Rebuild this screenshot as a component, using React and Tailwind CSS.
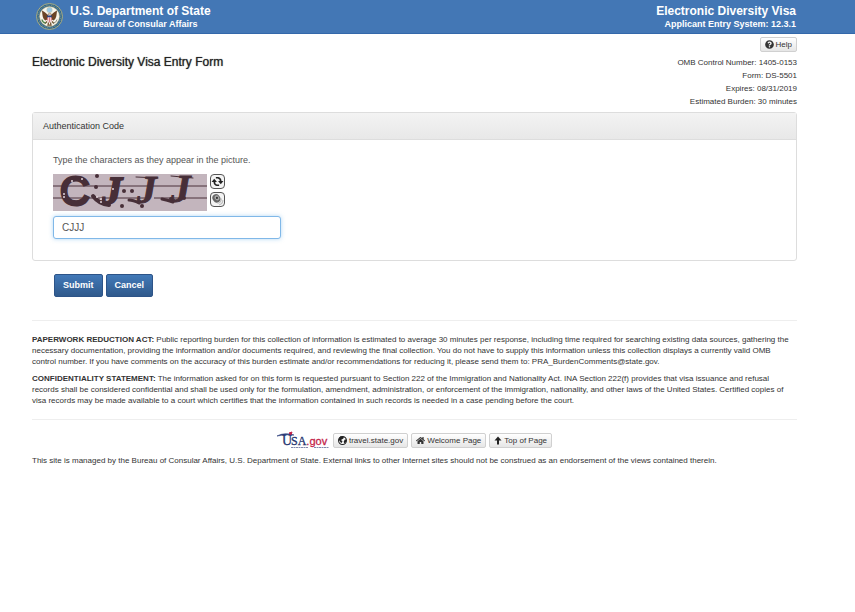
import React, { useState } from "react";
import { FaHome, FaQuestionCircle } from "react-icons/fa";

const burdenInfo = [
  "OMB Control Number: 1405-0153",
  "Form: DS-5501",
  "Expires: 08/31/2019",
  "Estimated Burden: 30 minutes",
];

const smallButton =
  "inline-flex items-center gap-[2px] h-[15px] px-1 rounded-[2px] border border-[#d0d0d0] bg-gradient-to-b from-white to-[#e6e6e6] text-[8px] leading-none text-[#333] whitespace-nowrap";

const primaryButton =
  "h-[23px] px-2 rounded-[2px] border border-[#2d5488] bg-gradient-to-b from-[#4279b8] to-[#305a8c] text-[9px] leading-none font-bold text-white";

const captchaButton =
  "flex items-center justify-center w-[15px] h-[15px] rounded-[4px] border border-[#555] bg-[#f4f4f4]";

const Seal = () => (
  <svg viewBox="0 0 54 54" className="w-[27px] h-[27px]" aria-hidden="true">
    <circle cx="27" cy="27" r="26" fill="#35678a" stroke="#a9ad83" strokeWidth="2" />
    <circle cx="27" cy="27" r="22.5" fill="none" stroke="#87a79b" strokeWidth="2" strokeDasharray="1.5 2" />
    <circle cx="27" cy="27" r="20" fill="#f7f5ec" stroke="#b9a96c" strokeWidth="1" />
    <circle cx="27" cy="14" r="5.5" fill="#9cc9e5" stroke="#c7c7a4" />
    <path d="M24 24 C20 21 17 17 12 15 C13 24 13 32 19 35 L24 32 Z" fill="#6a4426" />
    <path d="M30 24 C34 21 37 17 42 15 C41 24 41 32 35 35 L30 32 Z" fill="#6a4426" />
    <path d="M24 24 L26 20 L30 21 L31 24 Z" fill="#eee" stroke="#76502f" />
    <path d="M22 25 H32 V29 H22 Z" fill="#2c4580" />
    <path d="M22 29 H32 V33 Q31 38 27 39 Q23 38 22 33 Z" fill="#d97b80" />
    <path d="M25 29 V38 M29 29 V38" stroke="#fff" strokeWidth="1.3" />
    <path d="M22 37 L18 41 M32 37 L36 41 M25 39 L24 44 L30 44 L29 39" stroke="#70502c" strokeWidth="2.5" fill="none" />
    <path d="M12 33 Q13 39 19 40" stroke="#55864c" strokeWidth="3" fill="none" />
    <path d="M42 33 Q41 39 35 40" stroke="#989682" strokeWidth="2" fill="none" />
  </svg>
);

const captchaDots = [
  [44, 2, 2],
  [43, 13, 2],
  [71, 17, 2],
  [79, 17, 2],
  [69, 32, 2],
  [89, 32, 2],
  [118, 25, 2],
  [131, 24, 2],
];

const captchaSpecks = [
  [11, 20],
  [11, 23],
  [44, 23],
  [48, 25],
  [48, 28],
  [19, 7],
  [29, 5],
  [60, 15],
];

const CaptchaPicture = () => (
  <svg
    viewBox="0 0 154 37"
    className="w-[154px] h-[37px] overflow-visible bg-[#c3b5bd]"
    role="img"
    aria-label="Authentication picture"
  >
    <path d="M0 12 H154 M0 24 H94 M101 24 H154" stroke="#4a303a" strokeWidth="1" />
    <g fill="#472f38" stroke="#472f38" fontFamily="Liberation Sans">
      <text x="7" y="31" fontSize="41" strokeWidth="3">C</text>
      <g fontFamily="Liberation Serif" fontWeight="bold" fontStyle="italic">
        <text x="49" y="30" fontSize="40" strokeWidth="2">J</text>
        <text x="84" y="29" fontSize="39" strokeWidth="1">J</text>
        <text x="118" y="28" fontSize="39" strokeWidth="1">J</text>
      </g>
    </g>
    {/* ink smears */}
    <g fill="none" stroke="#472f38" strokeLinecap="round">
      <path d="M40 22 Q46 30 56 31" strokeWidth="4" />
      <path d="M76 26 Q80 26 86 29" strokeWidth="3" />
      <path d="M109 25 Q114 26 120 28" strokeWidth="3" />
      <path d="M83 3 L105 4 M118 2 L140 4" strokeWidth="1" />
    </g>
    {captchaDots.map(([cx, cy, r]) => (
      <circle key={`${cx}-${cy}`} cx={cx} cy={cy} r={r} fill="#472f38" />
    ))}
    {captchaSpecks.map(([cx, cy]) => (
      <circle key={`${cx}-${cy}`} cx={cx} cy={cy} r="1" fill="#e0d5da" />
    ))}
  </svg>
);

const RefreshIcon = () => (
  <svg viewBox="0 0 24 24" className="w-[13px] h-[13px]" aria-hidden="true">
    <path d="M9 5 H13 Q18 6 18 12" fill="none" stroke="#222" strokeWidth="3" />
    <path d="M13 11 H23 L18 17 Z" fill="#222" />
    <path d="M15 19 H11 Q6 18 6 12" fill="none" stroke="#222" strokeWidth="3" />
    <path d="M1 13 H11 L6 7 Z" fill="#222" />
  </svg>
);

const SpeakerIcon = () => (
  <svg viewBox="0 0 24 24" className="w-[13px] h-[13px]" aria-hidden="true">
    <ellipse cx="10" cy="10" rx="7" ry="8" fill="#666" transform="rotate(-35 10 10)" />
    <ellipse cx="11" cy="9" rx="4" ry="5" fill="#aaa" transform="rotate(-35 11 9)" />
    <circle cx="11" cy="9" r="2" fill="#333" />
    <path d="M12 19 Q19 18 19 10 M15 22 Q22 20 22 13" fill="none" stroke="#bbb" strokeWidth="2" />
  </svg>
);

const GlobeIcon = () => (
  <svg viewBox="0 0 16 16" className="w-[9px] h-[9px]" aria-hidden="true">
    <circle cx="8" cy="8" r="7" fill="#fff" stroke="#222" strokeWidth="2" />
    <path d="M1 6 L4 1 L10 1 L10 4 L7 6 L5 7 L8 9 L7 12 L5 12 L3 9 Z" fill="#222" />
    <path d="M12 6 L15 6 L14 11 L11 13 L10 10 Z" fill="#222" />
  </svg>
);

const ArrowIcon = () => (
  <svg viewBox="0 0 16 16" className="w-2 h-[9px]" aria-hidden="true">
    <path d="M8 0 L15 8 H10 V16 H6 V8 H1 Z" fill="#222" />
  </svg>
);

const UsaGovLogo = () => (
  <svg
    viewBox="0 0 53 17"
    className="w-[53px] h-[17px] overflow-visible"
    role="img"
    aria-label="USA.gov"
  >
    <path d="M0 4 Q7 0 17 3 Q8 2 0 4 Z" fill="#283a79" stroke="#283a79" strokeWidth="0.6" />
    <path d="M12 1 L15 0 L14 3 Z" fill="#c4234a" stroke="#c4234a" />
    <text y="13" fontFamily="Liberation Serif" fill="#26366f" stroke="#26366f" strokeWidth="0.3">
      <tspan x="5" fontSize="14">U</tspan>
      <tspan x="14" fontSize="12">SA</tspan>
      <tspan fontFamily="Liberation Sans" fontSize="11" fill="#c4234a" stroke="#c4234a">.gov</tspan>
    </text>
    <path d="M14 15.5 H31 M37 15.5 H52" stroke="#8289ad" strokeWidth="1" strokeDasharray="2 0.5" />
  </svg>
);

const App = () => {
  const [code, setCode] = useState("CJJJ");

  return (
    <div
      id="top"
      className="min-h-screen w-full bg-white font-['Liberation_Sans',Arial,sans-serif] text-[#333]"
    >
      <header className="flex justify-between h-[34px] pl-9 pr-[59px] pt-[3px] bg-[#4377b5] border-b border-[#3368aa] text-white font-bold">
        <div className="flex gap-[7px]">
          <Seal />
          <div className="text-center">
            <div className="text-[12px] leading-[16px]">U.S. Department of State</div>
            <div className="text-[9px] leading-[10px]">Bureau of Consular Affairs</div>
          </div>
        </div>
        <div className="text-right">
          <div className="text-[12px] leading-[16px]">Electronic Diversity Visa</div>
          <div className="text-[9px] leading-[10px]">Applicant Entry System: 12.3.1</div>
        </div>
      </header>

      <main className="ml-8 mr-[58px]">
        <div className="flex justify-between h-[78px] pt-[3px]">
          <h1 className="pt-4 text-[12px] leading-[18px] text-[#222] [text-shadow:0_0_1px_#555]">
            Electronic Diversity Visa Entry Form
          </h1>
          <div className="flex flex-col items-end gap-1">
            <button type="button" className={smallButton}>
              <FaQuestionCircle className="w-[9px] h-[9px]" />
              Help
            </button>
            <ul className="text-right text-[8px] leading-[13px]">
              {burdenInfo.map((line) => (
                <li key={line}>{line}</li>
              ))}
            </ul>
          </div>
        </div>

        <form onSubmit={(e) => e.preventDefault()}>
          <section className="h-[149px] rounded-[3px] border border-[#ddd]">
            <h2 className="h-[27px] px-[10px] border-b border-[#ddd] bg-gradient-to-b from-[#f3f3f3] to-[#e8e8e8] text-[9px] leading-[26px]">
              Authentication Code
            </h2>
            <div className="px-5 pt-[14px]">
              <label htmlFor="code" className="block text-[9px] leading-[13px] text-[#555]">
                Type the characters as they appear in the picture.
              </label>
              <div className="flex gap-[3px] pt-[7px]">
                <CaptchaPicture />
                <div className="flex flex-col gap-[3px]">
                  <button type="button" aria-label="New picture" className={captchaButton}>
                    <RefreshIcon />
                  </button>
                  <button type="button" aria-label="Play sound" className={captchaButton}>
                    <SpeakerIcon />
                  </button>
                </div>
              </div>
              <input
                id="code"
                type="text"
                autoFocus
                value={code}
                onChange={(e) => setCode(e.target.value)}
                className="block mt-[5px] w-[228px] h-[23px] px-2 rounded-[3px] border border-[#80b8e8] bg-white text-[10px] text-[#555] outline-none shadow-[0_0_4px_rgba(102,175,233,0.5)]"
              />
            </div>
          </section>

          <div className="flex gap-[3px] pt-[13px] pl-[22px]">
            <button type="submit" className={primaryButton}>Submit</button>
            <button type="button" className={primaryButton}>Cancel</button>
          </div>
        </form>

        <hr className="mt-[23px] border-[#eee]" />

        <div className="pt-[13px] pr-1 text-[8px] leading-[11px]">
          <p>
            <strong>PAPERWORK REDUCTION ACT:</strong> Public reporting burden for this collection of
            information is estimated to average 30 minutes per response, including time required for
            searching existing data sources, gathering the necessary documentation, providing the
            information and/or documents required, and reviewing the final collection. You do not have
            to supply this information unless this collection displays a currently valid OMB control
            number. If you have comments on the accuracy of this burden estimate and/or
            recommendations for reducing it, please send them to: PRA_BurdenComments@state.gov.
          </p>
          <p className="pt-[6px]">
            <strong>CONFIDENTIALITY STATEMENT:</strong> The information asked for on this form is
            requested pursuant to Section 222 of the Immigration and Nationality Act. INA Section
            222(f) provides that visa issuance and refusal records shall be considered confidential
            and shall be used only for the formulation, amendment, administration, or enforcement of
            the immigration, nationality, and other laws of the United States. Certified copies of
            visa records may be made available to a court which certifies that the information
            contained in such records is needed in a case pending before the court.
          </p>
        </div>

        <hr className="mt-[13px] border-[#eee]" />

        <footer>
          <div className="flex justify-center items-center gap-[3px] pt-3">
            <UsaGovLogo />
            <a href="#travel" className={smallButton}>
              <GlobeIcon />
              travel.state.gov
            </a>
            <a href="#welcome" className={smallButton}>
              <FaHome className="w-[9px] h-[9px]" />
              Welcome Page
            </a>
            <a href="#top" className={smallButton}>
              <ArrowIcon />
              Top of Page
            </a>
          </div>
          <p className="pt-[6px] text-[8px] leading-[11px]">
            This site is managed by the Bureau of Consular Affairs, U.S. Department of State. External
            links to other Internet sites should not be construed as an endorsement of the views
            contained therein.
          </p>
        </footer>
      </main>
    </div>
  );
};

export default App;
